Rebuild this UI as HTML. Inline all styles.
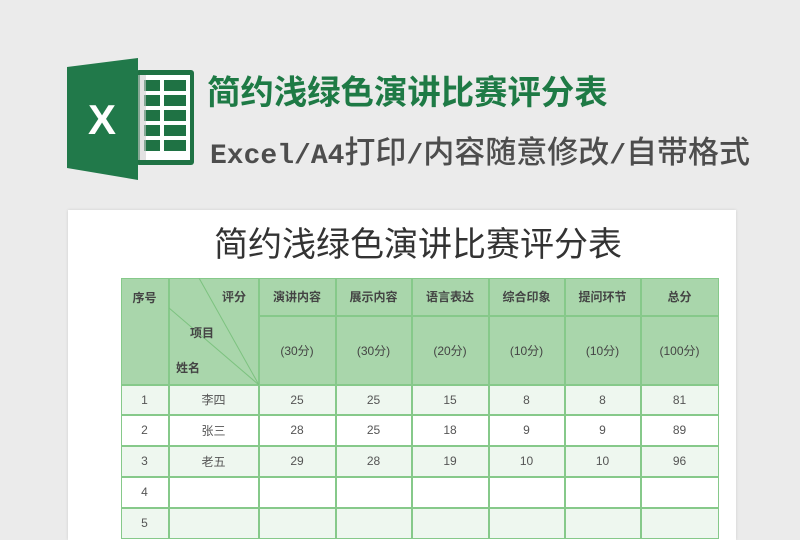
<!DOCTYPE html>
<html><head><meta charset="utf-8"><style>
*{margin:0;padding:0;box-sizing:border-box}
body{width:800px;height:526px;background:#ebebeb;position:relative;overflow:hidden;font-family:"Liberation Sans","Noto Sans CJK SC",sans-serif}
.abs{position:absolute}
.t1{left:207px;top:72px;font-size:33.4px;font-weight:bold;color:#1e7a45;white-space:nowrap;line-height:44px}
.t2{left:210px;top:132px;font-size:31px;color:#4d4d4d;white-space:nowrap;line-height:42px;font-weight:500}
.t2 .m{font-family:"Liberation Mono",monospace;font-size:28px;font-weight:bold}
.paper{left:68px;top:210px;width:668px;height:330px;background:#fff;box-shadow:0 0 3px rgba(0,0,0,.12)}
.pt{left:214px;top:223px;font-size:34px;color:#333;white-space:nowrap;line-height:44px}
.c{position:absolute;display:flex;align-items:center;justify-content:center;font-size:12px;color:#555;border:1px solid #86c98a;margin:-0.5px}
.h{background:#a9d6ab;font-weight:bold;color:#444}
</style></head><body>
<svg class="abs" style="left:66px;top:58px" width="130" height="124" viewBox="0 0 130 124">
<rect x="70" y="12" width="58" height="95" rx="3" fill="#1f7244"/>
<rect x="74" y="17" width="50" height="85" fill="#fff"/>
<g fill="#1f7244">
<rect x="78" y="22" width="16" height="11"/><rect x="98" y="22" width="22" height="11"/>
<rect x="78" y="37" width="16" height="11"/><rect x="98" y="37" width="22" height="11"/>
<rect x="78" y="52" width="16" height="11"/><rect x="98" y="52" width="22" height="11"/>
<rect x="78" y="67" width="16" height="11"/><rect x="98" y="67" width="22" height="11"/>
<rect x="78" y="82" width="16" height="11"/><rect x="98" y="82" width="22" height="11"/>
</g>
<rect x="72" y="17" width="8" height="85" fill="#cfcfcf" opacity=".6"/>
<polygon points="1,9 72,0 72,122 1,110" fill="#21794a"/>
<text x="36" y="76" font-family="Liberation Sans" font-weight="bold" font-size="42" fill="#fff" text-anchor="middle">X</text>
</svg>
<div class="abs t1">简约浅绿色演讲比赛评分表</div>
<div class="abs t2"><span class="m">Excel/A4</span>打印<span class="m">/</span>内容随意修改<span class="m">/</span>自带格式</div>
<div class="abs paper"></div>
<div class="abs pt">简约浅绿色演讲比赛评分表</div>

<div class="c h" style="left:121px;top:278px;width:48px;height:107px;align-items:flex-start;padding-top:10px">序号</div>
<div class="c h" style="left:169px;top:278px;width:90px;height:107px"></div>
<svg class="abs" style="left:169px;top:278px" width="90" height="107"><line x1="30" y1="0" x2="90" y2="107" stroke="#7cc27f"/><line x1="0" y1="30" x2="90" y2="107" stroke="#7cc27f"/></svg>
<div class="abs" style="left:222px;top:288px;font-size:12px;font-weight:bold;color:#444">评分</div>
<div class="abs" style="left:190px;top:324px;font-size:12px;font-weight:bold;color:#444">项目</div>
<div class="abs" style="left:176px;top:359px;font-size:12px;font-weight:bold;color:#444">姓名</div>

<div class="c h" style="left:259px;top:278px;width:77px;height:38px">演讲内容</div>
<div class="c h" style="left:336px;top:278px;width:76px;height:38px">展示内容</div>
<div class="c h" style="left:412px;top:278px;width:77px;height:38px">语言表达</div>
<div class="c h" style="left:489px;top:278px;width:76px;height:38px">综合印象</div>
<div class="c h" style="left:565px;top:278px;width:76px;height:38px">提问环节</div>
<div class="c h" style="left:641px;top:278px;width:78px;height:38px">总分</div>
<div class="c h" style="left:259px;top:316px;width:77px;height:69px;font-weight:normal">(30分)</div>
<div class="c h" style="left:336px;top:316px;width:76px;height:69px;font-weight:normal">(30分)</div>
<div class="c h" style="left:412px;top:316px;width:77px;height:69px;font-weight:normal">(20分)</div>
<div class="c h" style="left:489px;top:316px;width:76px;height:69px;font-weight:normal">(10分)</div>
<div class="c h" style="left:565px;top:316px;width:76px;height:69px;font-weight:normal">(10分)</div>
<div class="c h" style="left:641px;top:316px;width:78px;height:69px;font-weight:normal">(100分)</div>

<div class="abs" style="left:0;top:0">
<div class="c" style="left:121px;top:385px;width:48px;height:30px;background:#eef7ef">1</div><div class="c" style="left:169px;top:385px;width:90px;height:30px;background:#eef7ef">李四</div><div class="c" style="left:259px;top:385px;width:77px;height:30px;background:#eef7ef">25</div><div class="c" style="left:336px;top:385px;width:76px;height:30px;background:#eef7ef">25</div><div class="c" style="left:412px;top:385px;width:77px;height:30px;background:#eef7ef">15</div><div class="c" style="left:489px;top:385px;width:76px;height:30px;background:#eef7ef">8</div><div class="c" style="left:565px;top:385px;width:76px;height:30px;background:#eef7ef">8</div><div class="c" style="left:641px;top:385px;width:78px;height:30px;background:#eef7ef">81</div>
<div class="c" style="left:121px;top:415px;width:48px;height:31px;background:#fff">2</div><div class="c" style="left:169px;top:415px;width:90px;height:31px;background:#fff">张三</div><div class="c" style="left:259px;top:415px;width:77px;height:31px;background:#fff">28</div><div class="c" style="left:336px;top:415px;width:76px;height:31px;background:#fff">25</div><div class="c" style="left:412px;top:415px;width:77px;height:31px;background:#fff">18</div><div class="c" style="left:489px;top:415px;width:76px;height:31px;background:#fff">9</div><div class="c" style="left:565px;top:415px;width:76px;height:31px;background:#fff">9</div><div class="c" style="left:641px;top:415px;width:78px;height:31px;background:#fff">89</div>
<div class="c" style="left:121px;top:446px;width:48px;height:31px;background:#eef7ef">3</div><div class="c" style="left:169px;top:446px;width:90px;height:31px;background:#eef7ef">老五</div><div class="c" style="left:259px;top:446px;width:77px;height:31px;background:#eef7ef">29</div><div class="c" style="left:336px;top:446px;width:76px;height:31px;background:#eef7ef">28</div><div class="c" style="left:412px;top:446px;width:77px;height:31px;background:#eef7ef">19</div><div class="c" style="left:489px;top:446px;width:76px;height:31px;background:#eef7ef">10</div><div class="c" style="left:565px;top:446px;width:76px;height:31px;background:#eef7ef">10</div><div class="c" style="left:641px;top:446px;width:78px;height:31px;background:#eef7ef">96</div>
<div class="c" style="left:121px;top:477px;width:48px;height:31px;background:#fff">4</div><div class="c" style="left:169px;top:477px;width:90px;height:31px;background:#fff"></div><div class="c" style="left:259px;top:477px;width:77px;height:31px;background:#fff"></div><div class="c" style="left:336px;top:477px;width:76px;height:31px;background:#fff"></div><div class="c" style="left:412px;top:477px;width:77px;height:31px;background:#fff"></div><div class="c" style="left:489px;top:477px;width:76px;height:31px;background:#fff"></div><div class="c" style="left:565px;top:477px;width:76px;height:31px;background:#fff"></div><div class="c" style="left:641px;top:477px;width:78px;height:31px;background:#fff"></div>
<div class="c" style="left:121px;top:508px;width:48px;height:31px;background:#eef7ef">5</div><div class="c" style="left:169px;top:508px;width:90px;height:31px;background:#eef7ef"></div><div class="c" style="left:259px;top:508px;width:77px;height:31px;background:#eef7ef"></div><div class="c" style="left:336px;top:508px;width:76px;height:31px;background:#eef7ef"></div><div class="c" style="left:412px;top:508px;width:77px;height:31px;background:#eef7ef"></div><div class="c" style="left:489px;top:508px;width:76px;height:31px;background:#eef7ef"></div><div class="c" style="left:565px;top:508px;width:76px;height:31px;background:#eef7ef"></div><div class="c" style="left:641px;top:508px;width:78px;height:31px;background:#eef7ef"></div>
</div>
</body></html>
